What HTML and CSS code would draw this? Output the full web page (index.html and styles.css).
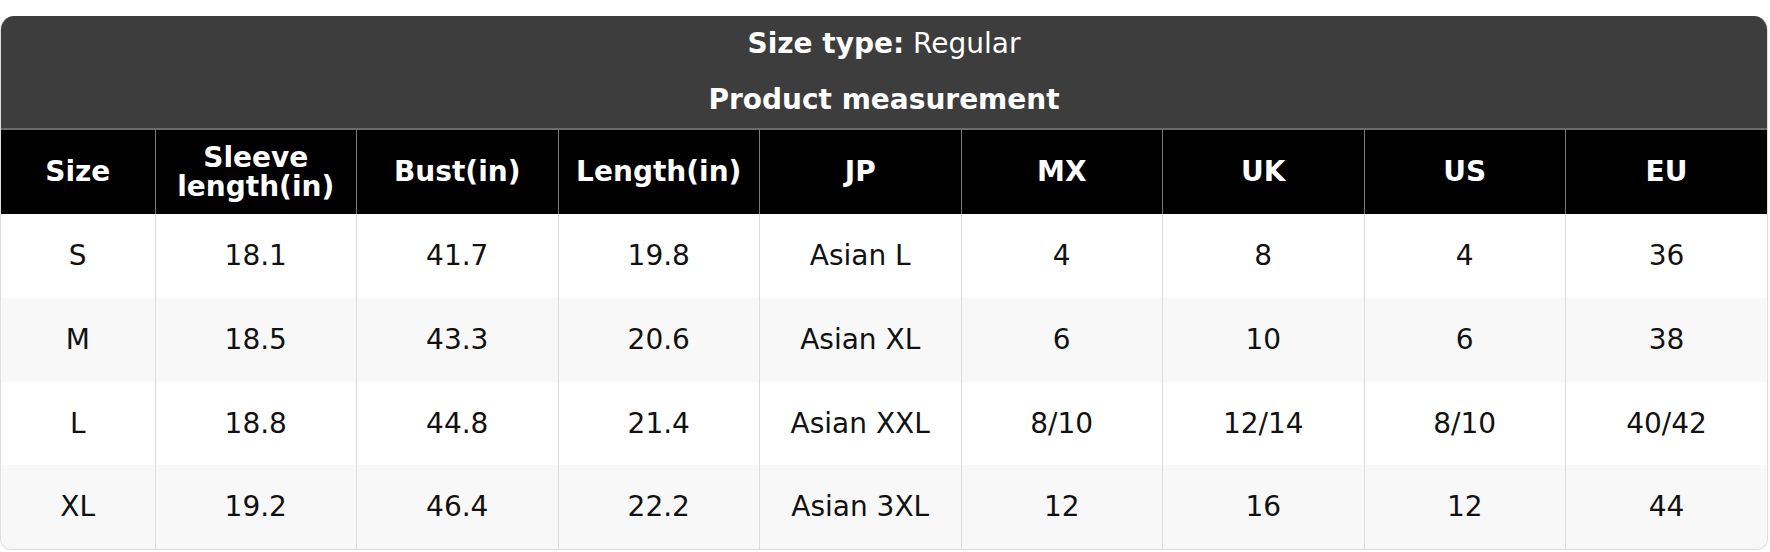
FILE: index.html
```html
<!DOCTYPE html>
<html>
<head>
<meta charset="utf-8">
<link rel="stylesheet" href="styles.css">
</head>
<body>
<div class="chart">
  <div class="chart-title">
    <div class="title-line"><strong>Size type:</strong> Regular</div>
    <div class="title-line"><strong>Product measurement</strong></div>
  </div>
  <table class="size-table">
    <colgroup>
      <col class="col-size">
      <col><col><col><col><col><col><col><col>
    </colgroup>
    <thead>
      <tr>
        <th>Size</th>
        <th><span class="head-line">Sleeve</span><span class="head-line">length(in)</span></th>
        <th>Bust(in)</th>
        <th>Length(in)</th>
        <th>JP</th>
        <th>MX</th>
        <th>UK</th>
        <th>US</th>
        <th>EU</th>
      </tr>
    </thead>
    <tbody>
      <tr><td>S</td><td>18.1</td><td>41.7</td><td>19.8</td><td>Asian L</td><td>4</td><td>8</td><td>4</td><td>36</td></tr>
      <tr><td>M</td><td>18.5</td><td>43.3</td><td>20.6</td><td>Asian XL</td><td>6</td><td>10</td><td>6</td><td>38</td></tr>
      <tr><td>L</td><td>18.8</td><td>44.8</td><td>21.4</td><td>Asian XXL</td><td>8/10</td><td>12/14</td><td>8/10</td><td>40/42</td></tr>
      <tr><td>XL</td><td>19.2</td><td>46.4</td><td>22.2</td><td>Asian 3XL</td><td>12</td><td>16</td><td>12</td><td>44</td></tr>
    </tbody>
  </table>
</div>
</body>
</html>
```

FILE: styles.css
```css
html, body {
  margin: 0;
  padding: 0;
  background: #ffffff;
}

body {
  padding-top: 16px;
  font-family: "DejaVu Sans", Verdana, sans-serif;
  font-size: 28px;
  color: #111111;
}

.chart {
  width: 1766px;
  border: 1px solid #dddddd;
  border-top: none;
  border-radius: 14px 14px 12px 12px;
  overflow: hidden;
  box-shadow: 0 1px 2px rgba(0, 0, 0, 0.08);
}

.chart-title {
  background: #3d3d3d;
  color: #ffffff;
  text-align: center;
}

.title-line {
  line-height: 56px;
  height: 56px;
}

.title-line strong {
  font-weight: bold;
}

.size-table {
  width: 100%;
  border-collapse: collapse;
  table-layout: fixed;
}

.col-size {
  width: 154px;
}

.size-table th {
  background: #000000;
  color: #ffffff;
  font-weight: bold;
  line-height: 28px;
  height: 58px;
  padding: 13px 4px;
  text-align: center;
  vertical-align: middle;
  border-top: 2px solid #6b6b6b;
  border-left: 1px solid #7a7a7a;
  border-right: 1px solid #7a7a7a;
}

.head-line {
  display: block;
  line-height: 29px;
}

.size-table th:first-child,
.size-table td:first-child {
  border-left: none;
}

.size-table th:last-child,
.size-table td:last-child {
  border-right: none;
}

.size-table td {
  text-align: center;
  vertical-align: middle;
  line-height: 33.75px;
  padding: 25px 4px;
  border-left: 1px solid #dcdcdc;
  border-right: 1px solid #dcdcdc;
}

.size-table tbody tr:nth-child(odd) td {
  background: #ffffff;
}

.size-table tbody tr:nth-child(even) td {
  background: #f8f8f8;
}
```
